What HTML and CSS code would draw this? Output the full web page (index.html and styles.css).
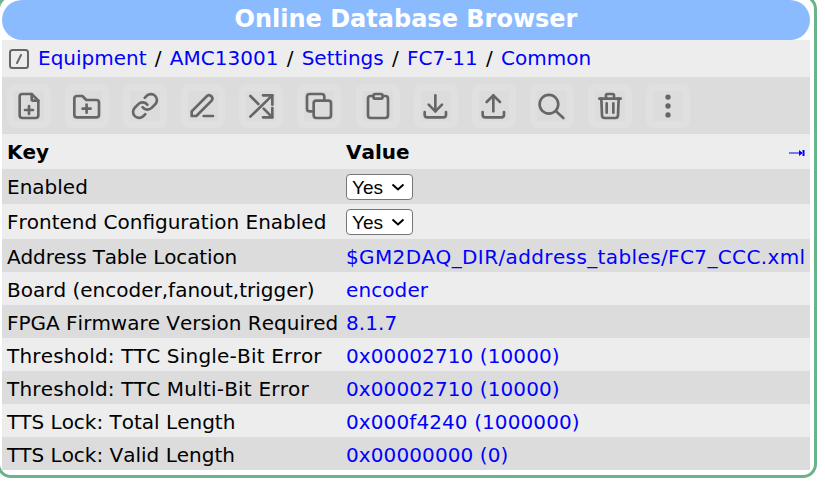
FILE: index.html
```html
<!DOCTYPE html>
<html lang="en">
<head>
<meta charset="utf-8">
<title>Online Database Browser</title>
<link rel="stylesheet" href="styles.css">
</head>
<body>
<div class="frame">
  <div class="title">Online Database Browser</div>
  <div class="crumbs">
    <svg class="edit-box" viewBox="0 0 20 20"><rect x="1" y="1" width="18" height="18" rx="2.5"/><path d="M8 14 12 6"/></svg>
    <span class="path"><a href="#">Equipment</a> / <a href="#">AMC13001</a> / <a href="#">Settings</a> / <a href="#">FC7-11</a> / <a href="#">Common</a></span>
  </div>
  <div class="toolbar">
    <span class="btn"><svg viewBox="0 0 24 24"><path d="M14 3v4a1 1 0 0 0 1 1h4"/><path d="M17 21H7a2 2 0 0 1-2-2V5a2 2 0 0 1 2-2h7l5 5v11a2 2 0 0 1-2 2z"/><path d="M12 12v6M9 15h6"/></svg></span>
    <span class="btn"><svg viewBox="0 0 24 24"><path d="M4.500 4.500h4l3 3h7.500a2 2 0 0 1 2 2v9a2 2 0 0 1-2 2h-14.500a2 2 0 0 1-2-2v-12a2 2 0 0 1 2-2"/><path d="M11.700 11v6M8.700 14h6"/></svg></span>
    <span class="btn"><svg viewBox="0 0 24 24"><g class="chain" transform="translate(1.200 1.200) scale(.9)"><path d="M10 13a5 5 0 0 0 7.540.54l3-3a5 5 0 0 0-7.070-7.070l-1.720 1.710"/><path d="M14 11a5 5 0 0 0-7.540-.54l-3 3a5 5 0 0 0 7.070 7.070l1.710-1.710"/></g></svg></span>
    <span class="btn"><svg viewBox="0 0 24 24"><path d="M3.500 19.500h3.500L18.500 8a2.500 2.500 0 0 0-3.500-3.500L3.500 16z"/><path d="M12.500 19.500h7"/></svg></span>
    <span class="btn"><svg viewBox="0 0 24 24"><path d="M13.500 4H20.500V11"/><path d="M4 20 20.500 4"/><path d="M20.500 13.500V20.500H13.500"/><path d="M20.500 20.500 14 14"/><path d="M4 4.500 10 10.500"/></svg></span>
    <span class="btn"><svg viewBox="0 0 24 24"><rect x="8" y="8" width="13" height="13" rx="2"/><path d="M16 8V5a2 2 0 0 0-2-2H5a2 2 0 0 0-2 2v9a2 2 0 0 0 2 2h3"/></svg></span>
    <span class="btn"><svg viewBox="0 0 24 24"><path d="M8.500 4.500H6.500a2 2 0 0 0-2 2V19a2 2 0 0 0 2 2h11a2 2 0 0 0 2-2V6.500a2 2 0 0 0-2-2h-2"/><rect x="8.500" y="3" width="7" height="3.500" rx="1.500"/></svg></span>
    <span class="btn"><svg viewBox="0 0 24 24"><path d="M3.500 16.500v2a2 2 0 0 0 2 2h12a2 2 0 0 0 2-2v-2"/><path d="M6.500 11l5 5 5-5"/><path d="M11.500 4v12"/></svg></span>
    <span class="btn"><svg viewBox="0 0 24 24"><path d="M3.500 16.500v2a2 2 0 0 0 2 2h12a2 2 0 0 0 2-2v-2"/><path d="M6.500 9l5-5 5 5"/><path d="M11.500 4v12"/></svg></span>
    <span class="btn"><svg viewBox="0 0 24 24"><circle cx="9.700" cy="10.700" r="7"/><path d="M15 16l5.500 5"/></svg></span>
    <span class="btn"><svg viewBox="0 0 24 24"><path d="M4 6.500h16"/><path d="M9.500 10v7M14.500 10v7"/><path d="M5.500 6.500l.5 12.500a2 2 0 0 0 2 2h8a2 2 0 0 0 2-2l.5-12.500"/><path d="M9 6.500V4a1 1 0 0 1 1-1h4a1 1 0 0 1 1 1v2.500"/></svg></span>
    <span class="btn"><svg viewBox="0 0 24 24"><circle class="dot" cx="12" cy="5.300" r="2"/><circle class="dot" cx="12" cy="12" r="2"/><circle class="dot" cx="12" cy="18.700" r="2"/></svg></span>
  </div>
  <table class="grid">
    <colgroup><col class="key-col"><col></colgroup>
    <tr class="head odd"><th>Key</th><th class="value-head">Value<svg class="expand" viewBox="0 0 16 8"><path d="M0 4h13M10 1.500 13 4l-3 2.500"/><rect x="13.500" y="1" width="2" height="6"/></svg></th></tr>
    <tr class="even tall"><td>Enabled</td><td><select><option>Yes</option><option>No</option></select></td></tr>
    <tr class="odd tall"><td>Frontend Configuration Enabled</td><td><select><option>Yes</option><option>No</option></select></td></tr>
    <tr class="even"><td class="narrow">Address Table Location</td><td><a class="long" href="#">$GM2DAQ_DIR/address_tables/FC7_CCC.xml</a></td></tr>
    <tr class="odd"><td>Board (encoder,fanout,trigger)</td><td><a href="#">encoder</a></td></tr>
    <tr class="even"><td>FPGA Firmware Version Required</td><td><a href="#">8.1.7</a></td></tr>
    <tr class="odd"><td class="roomy">Threshold: TTC Single-Bit Error</td><td><a href="#">0x00002710 (10000)</a></td></tr>
    <tr class="even"><td class="roomy">Threshold: TTC Multi-Bit Error</td><td><a href="#">0x00002710 (10000)</a></td></tr>
    <tr class="odd"><td>TTS Lock: Total Length</td><td><a href="#">0x000f4240 (1000000)</a></td></tr>
    <tr class="even"><td>TTS Lock: Valid Length</td><td><a href="#">0x00000000 (0)</a></td></tr>
  </table>
</div>
</body>
</html>
```
FILE: styles.css
```css
* { box-sizing: border-box; }
html, body { margin: 0; padding: 0; background: #fff; overflow: hidden; }
body { font-family: "DejaVu Sans", Verdana, sans-serif; font-size: 20px; font-kerning: none; color: #000; height: 490px; }
a { color: #00f; text-decoration: none; }
.frame {
  width: 820px;
  height: 483px;
  margin: -5px 0 0 -3px;
  border: 3px solid #6bb38a;
  border-radius: 14px;
  padding: 2px 4px 5px 2px;
  background: #fff;
}
.title {
  height: 40px;
  background: #8bbbff;
  border-radius: 20px;
  color: #fff;
  font-size: 24px;
  font-weight: bold;
  text-align: center;
  line-height: 39px;
}
.crumbs {
  height: 37px;
  background: #ededed;
  display: flex;
  align-items: center;
  gap: 9px;
  padding: 0 0 2px 7px;
  white-space: pre;
}
.path { word-spacing: 1.9px; }
.edit-box { width: 20px; height: 20px; flex: none; margin-top: 2px; fill: none; stroke: #666; stroke-width: 2; stroke-linecap: round; }
.toolbar {
  height: 57px;
  background: #dcdcdc;
  display: flex;
  align-items: center;
  gap: 14.1px;
  padding-left: 5px;
}
.btn {
  width: 44px;
  height: 44px;
  padding: 6px;
  background: #e0e0e0;
  border-radius: 8px;
  display: block;
}
.btn svg {
  display: block;
  width: 32px;
  height: 32px;
  background: linear-gradient(#dcdcdc, #dcdcdc) center / 30px 30px no-repeat;
  fill: none;
  stroke: #666;
  stroke-width: 2;
  stroke-linecap: round;
  stroke-linejoin: round;
}
.btn .chain { stroke-width: 2.2; }
.btn .dot { fill: #666; stroke: none; }
.grid { width: 100%; border-collapse: collapse; table-layout: fixed; }
.key-col { width: 340px; }
.grid td, .grid th { padding: 0 0 0 5px; text-align: left; height: 33px; white-space: nowrap; overflow: hidden; }
.grid td { padding-top: 2px; }
.grid td:nth-child(2), .grid th:nth-child(2) { padding-left: 4px; }
.grid td a { letter-spacing: .1px; }
.grid td a.long { letter-spacing: .38px; }
.grid td.narrow { letter-spacing: -.14px; }
.grid td.roomy { letter-spacing: .2px; }
.head th { height: 35px; font-weight: bold; }
.tall td { height: 35px; padding-top: 1px; }
.odd { background: #ededed; }
.even { background: #dcdcdc; }
.value-head { position: relative; }
.expand { position: absolute; right: 5px; top: 15px; width: 16px; height: 8px; fill: #00f; stroke: #00f; stroke-width: 1; }
.expand rect { stroke: none; }
select {
  font-family: "Liberation Sans", Arial, sans-serif;
  font-size: 19px;
  height: 26px;
  width: 67px;
  background: #fff url("data:image/svg+xml,%3Csvg xmlns='http://www.w3.org/2000/svg' width='15' height='8'%3E%3Cpath d='M1.500 1.500 7 6.500 12.500 1.500' fill='none' stroke='%23000' stroke-width='2'/%3E%3C/svg%3E") no-repeat 44px 8px;
  appearance: none;
  border: 1px solid #767676;
  border-radius: 4px;
  padding: 0 0 0 5px;
  color: #000;
  vertical-align: middle;
}
```
